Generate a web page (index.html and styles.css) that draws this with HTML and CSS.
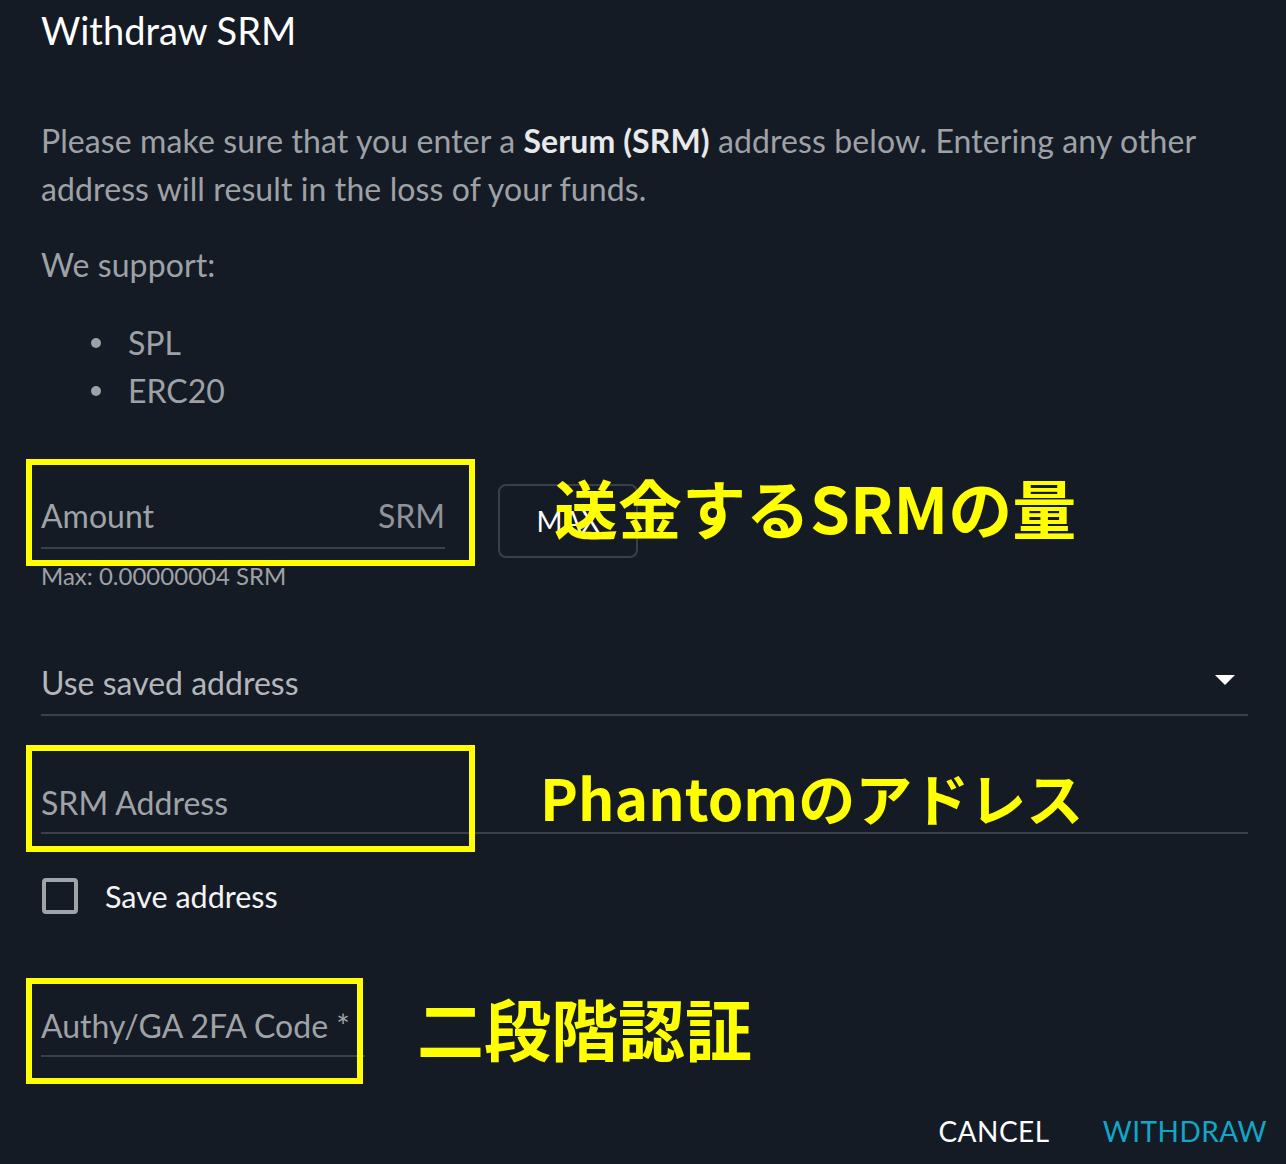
FILE: index.html
```html
<!DOCTYPE html>
<html lang="ja">
<head>
<meta charset="utf-8">
<title>Withdraw SRM</title>
<link rel="stylesheet" href="styles.css">
</head>
<body>
<div class="dialog">
  <h1 class="title">Withdraw SRM</h1>
  <p class="desc">Please make sure that you enter a <strong>Serum (SRM)</strong> address below. Entering any other address will result in the loss of your funds.</p>
  <p class="desc support">We support:</p>
  <ul class="nets">
    <li>SPL</li>
    <li>ERC20</li>
  </ul>

  <div class="amount-row">
    <div class="amount-col">
      <div class="field"><span class="label">Amount</span><span class="adorn">SRM</span></div>
      <div class="helper">Max: 0.00000004 SRM</div>
    </div>
    <button class="max-btn" type="button">MAX</button>
  </div>

  <div class="field select-field"><span class="label light">Use saved address</span><span class="arrow"></span></div>

  <div class="field address-field"><span class="label">SRM Address</span></div>

  <label class="check-row"><span class="checkbox"></span><span class="check-text">Save address</span></label>

  <div class="field code-field"><span class="label">Authy/GA 2FA Code *</span></div>

  <div class="actions">
    <button class="btn cancel" type="button">CANCEL</button>
    <button class="btn primary" type="button">WITHDRAW</button>
  </div>

  <div class="hl hl-amount"></div>
  <div class="hl hl-address"></div>
  <div class="hl hl-code"></div>
  <div class="note note-amount">送金するSRMの量</div>
  <div class="note note-address">Phantomのアドレス</div>
  <div class="note note-code">二段階認証</div>
</div>
</body>
</html>
```

FILE: styles.css
```css
html, body {
  margin: 0;
  padding: 0;
  background: #151b24;
}
body {
  font-family: Lato, "Open Sans", sans-serif;
  color: #9ea2a7;
  width: 1286px;
  height: 1164px;
  overflow: hidden;
}
.dialog {
  position: relative;
  padding: 8px 38px 0 41px;
}
.title {
  margin: 0 0 65px;
  font-size: 38px;
  line-height: 44px;
  font-weight: 400;
  color: #ffffff;
}
.desc {
  margin: 0;
  font-size: 32px;
  line-height: 48px;
  letter-spacing: 0.1px;
  color: #9ea2a7;
}
.desc strong {
  color: #e8e9ea;
  font-weight: 700;
}
.support {
  margin-top: 28px;
}
.nets {
  list-style: none;
  margin: 30px 0 0;
  padding: 0;
  font-size: 32px;
  line-height: 48px;
}
.nets li {
  display: flex;
  align-items: center;
  gap: 27px;
  padding-left: 50px;
}
.nets li::before {
  content: "";
  width: 10px;
  height: 10px;
  border-radius: 50%;
  background: #9ea2a7;
}
.amount-row {
  display: flex;
  align-items: flex-start;
  gap: 53px;
  margin-top: 45px;
}
.amount-col {
  width: 404px;
}
.field {
  display: flex;
  align-items: center;
  justify-content: space-between;
  padding-top: 32px;
  padding-bottom: 7px;
  border-bottom: 2px solid #3a4049;
  font-size: 32px;
  line-height: 48px;
}
.label {
  color: #9fa3a8;
}
.label.light {
  color: #b3b6ba;
}
.adorn {
  color: #8f949a;
}
.helper {
  margin-top: 9px;
  font-size: 24px;
  line-height: 36px;
  color: #9ea2a7;
}
.max-btn {
  margin-top: 24px;
  width: 140px;
  height: 74px;
  border: 2px solid #3a4049;
  border-radius: 8px;
  background: transparent;
  color: #ffffff;
  font-family: Lato, sans-serif;
  font-size: 28px;
  padding: 0;
}
.select-field {
  margin-top: 65px;
  padding-top: 0;
}
.arrow {
  width: 0;
  height: 0;
  border-left: 10px solid transparent;
  border-right: 10px solid transparent;
  border-top: 10px solid #ffffff;
  margin-right: 13px;
  margin-bottom: 6px;
}
.address-field {
  margin-top: 63px;
  padding-top: 0;
  padding-bottom: 5px;
}
.check-row {
  display: flex;
  align-items: center;
  gap: 27px;
  margin-top: 38px;
  height: 48px;
  font-size: 30.5px;
  line-height: 48px;
}
.checkbox {
  box-sizing: border-box;
  width: 36px;
  height: 36px;
  margin-left: 1px;
  border: 4px solid #a0a4a8;
  border-radius: 4px;
}
.check-text {
  color: #f2f3f4;
}
.code-field {
  width: 324px;
  margin-top: 82px;
  padding-top: 0;
  padding-bottom: 5px;
}
.actions {
  display: flex;
  justify-content: flex-end;
  gap: 53px;
  margin-top: 50px;
  margin-right: -19px;
}
.btn {
  background: transparent;
  border: 0;
  padding: 0;
  font-family: Lato, sans-serif;
  font-size: 28px;
  line-height: 48px;
  letter-spacing: 0.5px;
}
.cancel {
  color: #ffffff;
}
.primary {
  color: #10a7c8;
}
.hl {
  position: absolute;
  box-sizing: border-box;
  border: 6px solid #ffff00;
}
.hl-amount {
  left: 26px;
  top: 459px;
  width: 449px;
  height: 107px;
}
.hl-address {
  left: 26px;
  top: 745px;
  width: 449px;
  height: 107px;
}
.hl-code {
  left: 26px;
  top: 978px;
  width: 337px;
  height: 106px;
}
.note {
  position: absolute;
  font-family: "Noto Sans CJK JP", sans-serif;
  font-weight: 700;
  color: #ffff00;
  line-height: 1;
  white-space: nowrap;
}
.note-amount {
  left: 554px;
  top: 474px;
  font-size: 64px;
}
.note-address {
  left: 540px;
  top: 768px;
  font-size: 57px;
}
.note-code {
  left: 417px;
  top: 993px;
  font-size: 67px;
}
```
